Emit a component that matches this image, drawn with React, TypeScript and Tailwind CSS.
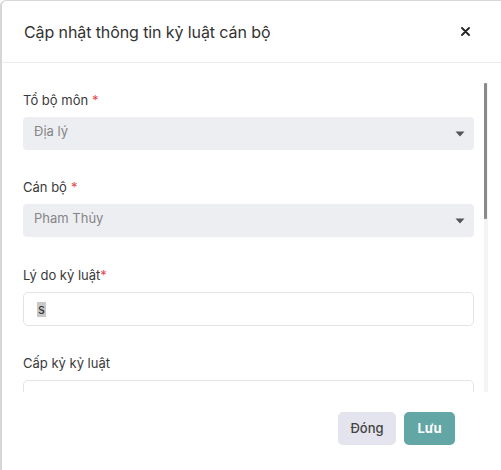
import React from "react";

const Caret = () => (
    <svg width="10" height="6" viewBox="0 0 10 6" className="shrink-0">
        <path d="M0.5 0.5 L9.5 0.5 L5 5.5 Z" fill="#555" />
    </svg>
);

const Label = ({ text, required, tight }: { text: string; required?: boolean; tight?: boolean }) => (
    <div className="text-[13px] leading-[16px] text-[#3a3a3a]">
        {text}
        {required && <span className={`text-[#e5484d] ${tight ? "" : "ml-1"}`}>*</span>}
    </div>
);

const SelectBox = ({ value }: { value: string }) => (
    <div className="mt-[9px] h-[33px] rounded-[4px] bg-[#edeef2] pl-[11px] pr-[9px] flex items-center justify-between">
        <span className="text-[13px] text-[#858585] -mt-[3px]">{value}</span>
        <Caret />
    </div>
);

export default function App() {
    return (
        <div
            className="w-[501px] h-[470px] bg-white border-l-2 border-t border-[#d6d6d6] rounded-tl-[6px] flex flex-col overflow-hidden"
            style={{ fontFamily: "Inter, 'Noto Sans', sans-serif" }}
        >
            {/* Header */}
            <div className="h-[62px] shrink-0 flex items-center justify-between pl-[22px] pr-[31px] border-b border-[#ececec]">
                <h1 className="text-[16px] text-[#333] font-normal tracking-[-0.1px]">Cập nhật thông tin kỷ luật cán bộ</h1>
                <button className="text-[#222]">
                    <svg width="9" height="9" viewBox="0 0 9 9">
                        <path d="M1 1 L8 8 M8 1 L1 8" stroke="#222" strokeWidth="1.8" strokeLinecap="round" />
                    </svg>
                </button>
            </div>

            {/* Body */}
            <div className="h-[329px] shrink-0 flex">
                <div className="w-[451px] shrink-0 overflow-hidden ml-[21px] pt-[29px]">
                    <Label text="Tổ bộ môn" required />
                    <SelectBox value="Địa lý" />

                    <div className="mt-[29px]">
                        <Label text="Cán bộ" required />
                        <SelectBox value="Pham Thủy" />
                    </div>

                    <div className="mt-[30px]">
                        <Label text="Lý do kỷ luật" required tight />
                        <div className="mt-[9px] h-[34px] rounded-[5px] border border-[#e3e3e3] flex items-center pl-[13px]">
                            <span className="text-[13px] text-[#333] bg-[#c8c8c8] leading-[15px] px-[1px]">s</span>
                        </div>
                    </div>

                    <div className="mt-[29px]">
                        <Label text="Cấp kỷ kỷ luật" />
                        <div className="mt-[9px] h-[34px] rounded-[5px] border border-[#e3e3e3]" />
                    </div>
                </div>
                <div className="ml-[10px] w-[4px] shrink-0 pt-[20px]">
                    <div className="w-[4px] h-full bg-[#f4f4f4] flex flex-col">
                        <div className="h-[136px] w-[3px] bg-[#8a8a8a] rounded-[1px]" />
                    </div>
                </div>
            </div>

            {/* Footer */}
            <div className="flex justify-end gap-[8px] pr-[46px] pt-[20px]">
                <button className="h-[33px] w-[58px] rounded-[5px] bg-[#e3e4ed] text-[13px] font-medium text-[#444]">Đóng</button>
                <button className="h-[33px] w-[51px] rounded-[5px] bg-[#62a6a5] text-[13px] font-bold text-white">Lưu</button>
            </div>
        </div>
    );
}
